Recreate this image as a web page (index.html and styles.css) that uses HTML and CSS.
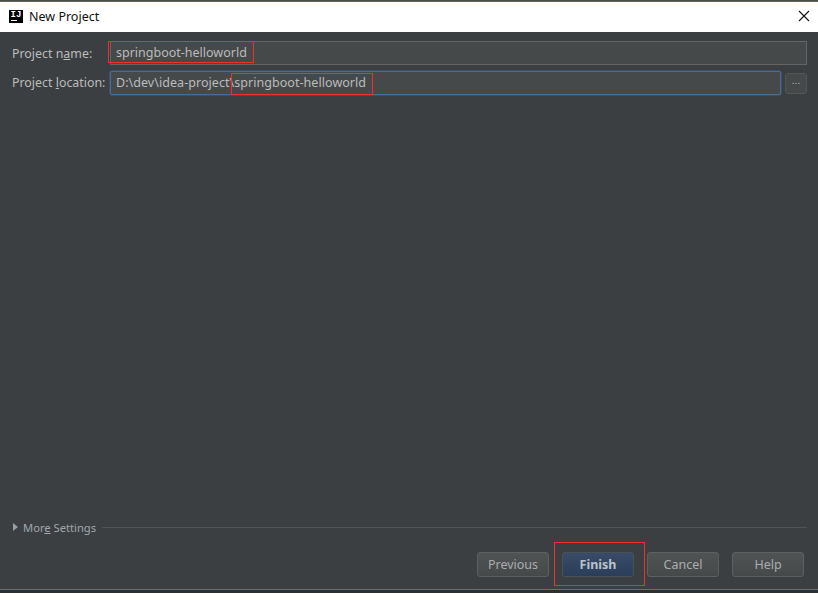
FILE: index.html
```html
<!DOCTYPE html>
<html lang="en">
<head>
  <meta charset="UTF-8" />
  <title>New Project</title>
  <link rel="stylesheet" href="styles.css">
</head>
<body>
  <div class="top-strip"></div>
  <div class="titlebar">
    <div class="logo"><span class="logo-text">IJ</span><span class="logo-bar"></span></div>
    <span class="title">New Project</span>
    <svg class="close" width="12" height="12" viewBox="0 0 12 12"><path d="M1 1 L11 11 M11 1 L1 11" stroke="#111" stroke-width="1.1" fill="none"/></svg>
  </div>

  <div class="dialog">
    <div class="form">
      <div class="row">
        <label class="label">Project n<u>a</u>me:</label>
        <div class="input">springboot-helloworld</div>
      </div>
      <div class="row row-location">
        <label class="label">Project <u>l</u>ocation:</label>
        <div class="input input-focus">D:\dev\idea-project\springboot-helloworld</div>
        <button class="browse">...</button>
      </div>
    </div>

    <div class="more">
      <span class="arrow"></span>
      <span class="more-text">Mor<u>e</u> Settings</span>
      <span class="line"></span>
    </div>

    <div class="buttons">
      <button class="btn">Previous</button>
      <button class="btn btn-default">Finish</button>
      <button class="btn">Cancel</button>
      <button class="btn">Help</button>
    </div>

    <!-- red annotation boxes drawn over the screenshot -->
    <div class="mark mark-name"></div>
    <div class="mark mark-location"></div>
    <div class="mark mark-finish"></div>
  </div>
  <div class="bottom-strip"></div>
</body>
</html>
```

FILE: styles.css
```css
* {
  box-sizing: border-box;
}
html, body {
  height: 100%;
}
body {
  margin: 0;
  display: flex;
  flex-direction: column;
  overflow: hidden;
  font-family: "Noto Sans", "Open Sans", sans-serif;
  font-size: 13px;
  background-color: #3c3f41;
}
.top-strip {
  height: 2px;
  background-color: #2f6f9f;
  border-top: 1px solid #4a4f4c;
}
.titlebar {
  height: 30px;
  background-color: #fff;
  display: flex;
  align-items: center;
  padding: 0 8px 2px 9px;
}
.logo {
  width: 14px;
  height: 13px;
  padding-top: 1px;
  background-color: #000;
  color: #fff;
  display: flex;
  flex-direction: column;
  align-items: center;
  font-family: "Liberation Mono", monospace;
  font-size: 9px;
  font-weight: bold;
  line-height: 8px;
}
.logo-bar {
  width: 6px;
  height: 1px;
  background-color: #fff;
  margin: 1px 0 0 -5px;
}
.title {
  margin-left: 6px;
  font-size: 12.5px;
  color: #111;
}
.close {
  margin-left: auto;
}
.dialog {
  position: relative;
  flex: 1;
  display: flex;
  flex-direction: column;
  background-color: #3c3f41;
  padding: 9px 11px 12px 12px;
}
.form {
  flex: 1;
}
.row {
  display: flex;
  align-items: center;
  height: 24px;
}
.row-location {
  margin-top: 6px;
}
.label {
  width: 98px;
  color: #bbbbbb;
  font-size: 12.4px;
}
.row-location .label {
  margin-bottom: 2px;
}
.input {
  flex: 1;
  height: 24px;
  padding: 0 5px;
  line-height: 22px;
  color: #bbbbbb;
  font-size: 12.5px;
  background-color: #45494a;
  border: 1px solid #646464;
}
.input-focus {
  border-color: #466d94;
  border-radius: 2px;
  box-shadow: 0 0 0 0.5px #3d6185;
  letter-spacing: 0.05px;
}
.browse {
  width: 22px;
  height: 21px;
  margin-left: 4px;
  padding: 0 0 4px;
  color: #bbbbbb;
  font-size: 10px;
  line-height: 12px;
  background-color: #45494a;
  border: 1px solid #555;
  border-radius: 3px;
}
.more {
  display: flex;
  align-items: center;
  height: 14px;
  margin-bottom: 18px;
  color: #a0a8ad;
}
.arrow {
  width: 0;
  height: 0;
  margin-left: 1px;
  border-left: 5px solid #9a9d9f;
  border-top: 4px solid transparent;
  border-bottom: 4px solid transparent;
}
.more-text {
  margin-left: 5px;
  font-size: 11.2px;
}
.line {
  flex: 1;
  height: 1px;
  margin-left: 6px;
  background-color: #515354;
}
.buttons {
  display: flex;
  justify-content: flex-end;
  gap: 13px;
  padding-right: 3px;
}
.btn {
  width: 72px;
  height: 25px;
  padding: 0;
  font-family: inherit;
  font-size: 12.5px;
  color: #a9adaf;
  background: linear-gradient(#505354, #46494a);
  border: 1px solid #5d6061;
  border-radius: 3px;
}
.btn-default {
  font-weight: bold;
  color: #bbc3ca;
  background: linear-gradient(#384c68, #2a3d59);
  border-color: #4b5158;
}
.mark {
  position: absolute;
  border: 1px solid #f0302c;
}
.mark-name {
  left: 108px;
  top: 9px;
  width: 146px;
  height: 22px;
}
.mark-location {
  left: 231px;
  top: 41px;
  width: 142px;
  height: 22px;
}
.mark-finish {
  left: 554px;
  top: 510px;
  width: 91px;
  height: 44px;
}
.bottom-strip {
  height: 4px;
  background-color: #2d2f30;
  border-top: 1px solid #2f7fb8;
}
```
